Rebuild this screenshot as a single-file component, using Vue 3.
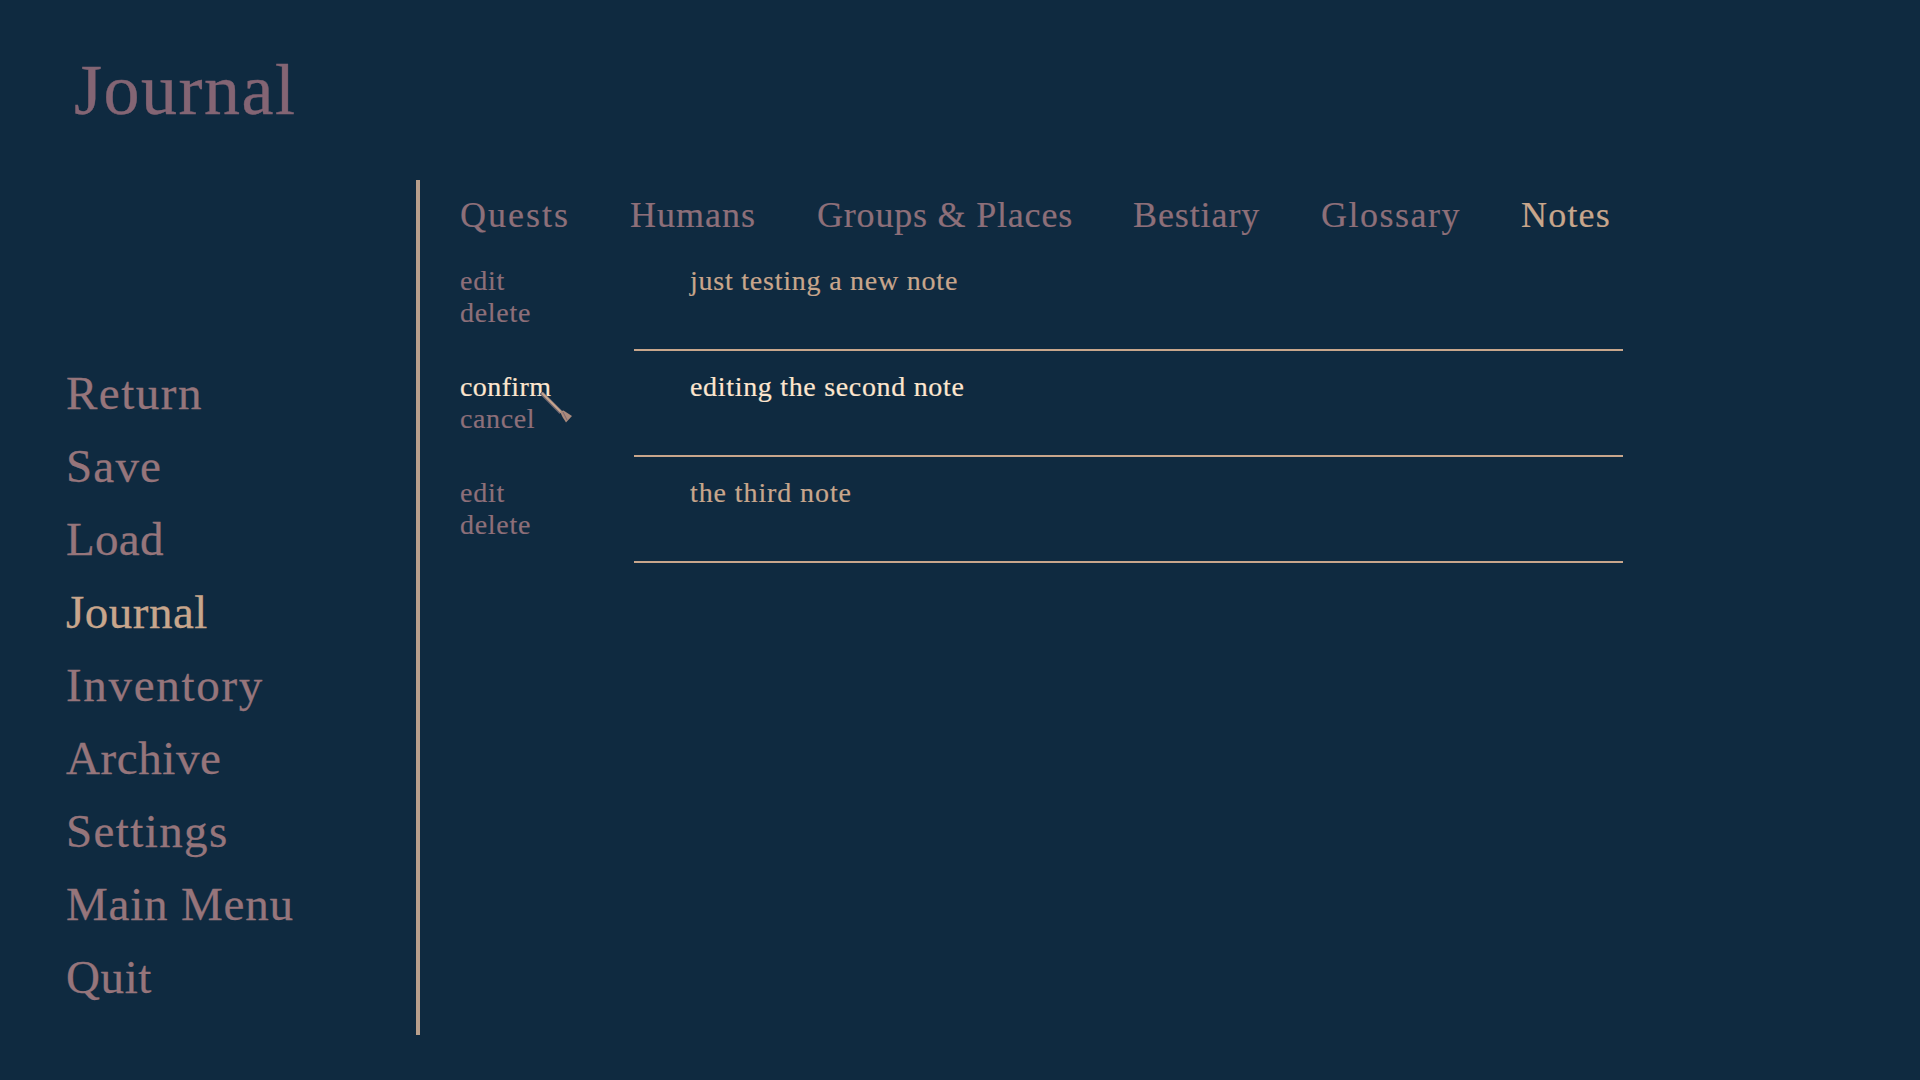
<script setup>
const menu = [
  { label: 'Return', ls: 1.5 },
  { label: 'Save', ls: 1.2 },
  { label: 'Load', ls: 0.3 },
  { label: 'Journal', ls: 0.5 },
  { label: 'Inventory', ls: 1.7 },
  { label: 'Archive', ls: 0.6 },
  { label: 'Settings', ls: 1.4 },
  { label: 'Main Menu', ls: 0.8 },
  { label: 'Quit', ls: 0.6 }
]
const tabs = [
  { label: 'Quests', w: 170, ls: 2 },
  { label: 'Humans', w: 187, ls: 1 },
  { label: 'Groups & Places', w: 316, ls: 0.8 },
  { label: 'Bestiary', w: 188, ls: 0.9 },
  { label: 'Glossary', w: 200, ls: 1.5 },
  { label: 'Notes', w: 100, ls: 1.2 }
]
const notes = [
  { a: 'edit', b: 'delete', aLs: 0.8, bLs: 0.7, text: 'just testing a new note', ls: 0.77 },
  { a: 'confirm', b: 'cancel', aLs: 0.4, bLs: 0.6, text: 'editing the second note', ls: 0.68, editing: true },
  { a: 'edit', b: 'delete', aLs: 0.8, bLs: 0.7, text: 'the third note', ls: 0.9 }
]
</script>

<template>
  <div class="page">
    <h1 class="title">Journal</h1>
    <div class="body">
      <nav class="menu">
        <div
          v-for="m in menu"
          :key="m.label"
          class="menu-item"
          :class="{ active: m.label === 'Journal' }"
          :style="{ letterSpacing: m.ls + 'px' }"
        >{{ m.label }}</div>
      </nav>
      <main class="content">
        <div class="tabs">
          <div
            v-for="t in tabs"
            :key="t.label"
            class="tab"
            :class="{ active: t.label === 'Notes' }"
            :style="{ width: t.w + 'px', letterSpacing: t.ls + 'px' }"
          >{{ t.label }}</div>
        </div>
        <div class="notes">
          <div v-for="n in notes" :key="n.text" class="note">
            <div class="actions">
              <div :class="{ confirm: n.editing }" :style="{ letterSpacing: n.aLs + 'px' }">{{ n.a }}</div>
              <div :style="{ letterSpacing: n.bLs + 'px' }">{{ n.b }}</div>
            </div>
            <div class="note-body">
              <div class="note-text" :class="{ editing: n.editing }" :style="{ letterSpacing: n.ls + 'px' }">{{ n.text }}</div>
            </div>
          </div>
        </div>
      </main>
    </div>
    <svg class="cursor" width="34" height="34" viewBox="0 0 34 34">
      <path d="M1 0.500 L21 20.500" stroke="#6f6672" stroke-width="4" fill="none" />
      <path d="M2 1 L21.500 20.500" stroke="#c9a68c" stroke-width="2" fill="none" />
      <path d="M20 19.500 L23.500 18.500 L32 24 L26 30.500 L22.500 25 Z" fill="#a98a7c" />
      <path d="M23 20 L27 28" stroke="#7d6872" stroke-width="1" fill="none" />
    </svg>
  </div>
</template>

<style>
html, body { margin: 0; background: #0f2a40; }
</style>

<style scoped>
.page {
  position: relative;
  box-sizing: border-box;
  width: 1920px;
  height: 1080px;
  overflow: hidden;
  background: #0f2a40;
  font-family: "Liberation Serif", serif;
  display: flex;
  flex-direction: column;
  padding: 47px 0 0 0;
}
.title {
  margin: 0 0 0 74px;
  height: 133px;
  font-size: 72px;
  line-height: 86px;
  font-weight: 400;
  letter-spacing: 1.5px;
  color: #846574;
  -webkit-text-stroke: 0.4px #846574;
}
.body { display: flex; height: 855px; }
.menu {
  width: 350px;
  margin-left: 66px;
  display: flex;
  flex-direction: column;
  justify-content: flex-end;
  padding-bottom: 21px;
  box-sizing: border-box;
}
.menu-item {
  height: 73px;
  line-height: 73px;
  font-size: 47px;
  color: #96757b;
  -webkit-text-stroke: 0.3px currentColor;
}
.menu-item.active { color: #c8a68c; }
.content {
  border-left: 4px solid #b89f8c;
  padding-left: 40px;
  width: 1170px;
}
.tabs { display: flex; height: 64px; align-items: center; padding-top: 5px; box-sizing: border-box; }
.tab {
  font-size: 36px;
  line-height: 44px;
  color: #8d6f79;
  white-space: nowrap;
  flex: none;
  -webkit-text-stroke: 0.2px currentColor;
}
.tab.active { color: #c8a68c; }
.notes { margin-top: 1px; }
.note {
  height: 106px;
  display: flex;
}
.actions {
  width: 174px;
  font-size: 28px;
  line-height: 32px;
  padding-top: 20px;
  color: #8d6f79;
  flex: none;
  -webkit-text-stroke: 0.2px currentColor;
}
.confirm { color: #fde6cf; }
.note-body {
  width: 989px;
  height: 106px;
  box-sizing: border-box;
  border-bottom: 2px solid #c8a68c;
  padding: 20px 0 0 56px;
}
.note-text {
  font-size: 28px;
  line-height: 32px;
  color: #c8a68c;
  -webkit-text-stroke: 0.2px currentColor;
}
.note-text.editing { color: #fde6cf; }
.cursor {
  position: absolute;
  left: 540px;
  top: 392px;
}
</style>
